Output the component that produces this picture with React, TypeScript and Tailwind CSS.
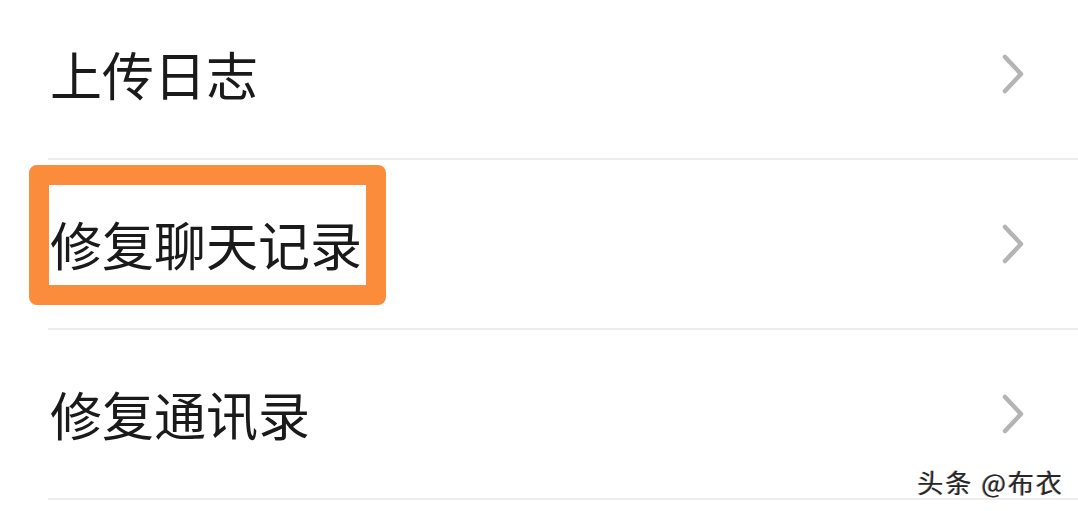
const rows = ["上传日志", "修复聊天记录", "修复通讯录"];

function Chevron() {
  return (
    <svg width="22" height="40" viewBox="0 0 22 40" fill="none" className="shrink-0">
      <path
        d="M3 3 L19 20 L3 37"
        stroke="#b4b4b4"
        strokeWidth="4.5"
        strokeLinecap="round"
        strokeLinejoin="round"
      />
    </svg>
  );
}

export default function App() {
  return (
    <div
      className="relative h-[511px] w-[1078px] overflow-hidden bg-white"
      style={{ fontFamily: '"Noto Sans CJK SC", "Noto Sans", sans-serif' }}
    >
      <div className="-mt-[10px]">
        {rows.map((label, i) => (
          <div
            key={label}
            className="ml-[48px] flex h-[170px] items-center justify-between border-b-2 border-[#ededed] pl-[2px] pr-[54px]"
          >
            <span className="relative text-[52px] leading-[52px] text-[#1a1a1a]">
              {i === 1 && (
                <span className="absolute -top-[53px] -bottom-[35px] -left-[21px] -right-[24px] rounded-[8px] border-[20px] border-[#fa8c3c]" />
              )}
              <span className="relative">{label}</span>
            </span>
            <Chevron />
          </div>
        ))}
      </div>
      <div
        className="absolute right-[14px] top-[465px] text-[26px] leading-[34px] tracking-[2px] text-[#262626]"
        style={{ textShadow: "1px 1px 0 #ffffff, -1px 0 0 #9a9a9a" }}
      >
        头条 @布衣
      </div>
    </div>
  );
}
